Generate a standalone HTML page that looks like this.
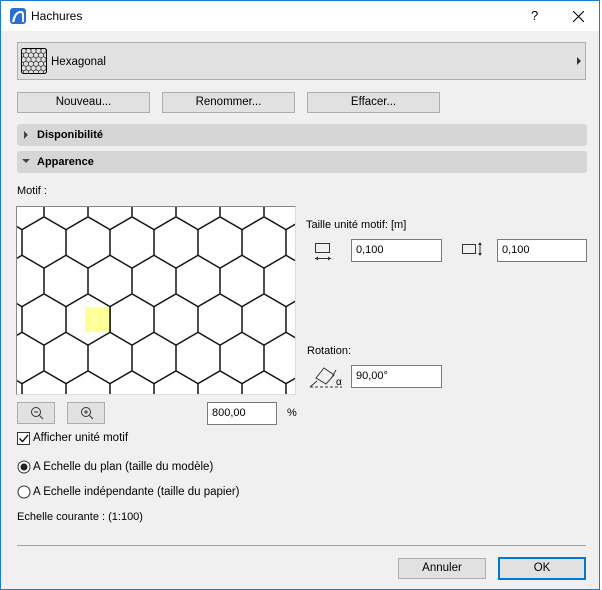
<!DOCTYPE html>
<html><head><meta charset="utf-8"><style>
*{box-sizing:border-box;margin:0;padding:0}
body{width:602px;height:590px;background:#fff;font-family:"Liberation Sans",sans-serif;font-size:11px;color:#000;position:relative;overflow:hidden}
.win{position:absolute;left:0;top:0;width:600px;height:590px;border:1px solid #1a7fd4;background:#f0f0f0}
.title{position:absolute;left:0;top:0;width:598px;height:30px;background:#fff}
.a{position:absolute}
.btn{position:absolute;background:#e1e1e1;border:1px solid #adadad;text-align:center;line-height:19px;font-size:11.5px}
.hdr{position:absolute;left:16px;width:570px;height:22px;background:#d6d6d6;border-radius:3px;font-weight:bold;font-size:11px;line-height:22px;padding-left:20px}
.inp{position:absolute;background:#fff;border:1px solid #7a7a7a;height:23px;line-height:21px;padding-left:4px;font-size:11px}
</style></head><body>
<div class="win">
<div class="title">
<svg class="a" style="left:9px;top:7px" width="16" height="16" viewBox="0 0 16 16"><rect x="0" y="0" width="16" height="16" rx="3" fill="#2a6fd0"/><path d="M2 14 Q4 3 11 3 Q14 3 14 7 L14 14 L12 14 L12 7 Q12 5 10.5 5 Q6 5 4.5 14 Z" fill="#fff"/></svg>
<div class="a" style="left:30px;top:8px;font-size:12px">Hachures</div>
<div class="a" style="left:530px;top:7px;font-size:13px">?</div>
<svg class="a" style="left:572px;top:10px" width="11" height="11"><path d="M0 0L11 11M11 0L0 11" stroke="#000" stroke-width="1.1"/></svg>
</div>
<div class="a" style="left:16px;top:41px;width:569px;height:38px;background:#e1e1e1;border:1px solid #adadad"></div>
<svg class="a" style="left:20px;top:47px" width="26" height="26"><defs><pattern id="sh" width="5" height="8.66" patternUnits="userSpaceOnUse"><path d="M2.5 0L5 1.44L5 4.33L2.5 5.77L0 4.33L0 1.44Z M2.5 5.77L2.5 8.66" fill="none" stroke="#000" stroke-width="0.6"/></pattern></defs><rect x="0.5" y="0.5" width="25" height="25" rx="2" fill="url(#sh)" stroke="#000"/></svg>
<div class="a" style="left:50px;top:55px;font-size:11.5px">Hexagonal</div>
<svg class="a" style="left:576px;top:56px" width="5" height="8"><path d="M0 0L4 4L0 8Z" fill="#333"/></svg>
<div class="btn" style="left:16px;top:91px;width:133px;height:21px">Nouveau...</div>
<div class="btn" style="left:161px;top:91px;width:133px;height:21px">Renommer...</div>
<div class="btn" style="left:306px;top:91px;width:133px;height:21px">Effacer...</div>
<div class="hdr" style="top:123px">Disponibilité</div>
<svg class="a" style="left:23px;top:130px" width="5" height="8"><path d="M0 0L4 4L0 8Z" fill="#444"/></svg>
<div class="hdr" style="top:150px">Apparence</div>
<svg class="a" style="left:21px;top:158px" width="8" height="5"><path d="M0 0L8 0L4 4Z" fill="#444"/></svg>
<div class="a" style="left:16px;top:184px">Motif :</div>
<div class="a" style="left:15px;top:205px;width:280px;height:189px;border-top:1px solid #888;border-left:1px solid #888;border-right:1px solid #ddd;border-bottom:1px solid #ddd;background:#fff;overflow:hidden">
<svg width="278" height="187" style="display:block"><defs><pattern id="hx" x="5" y="9.83" width="44" height="77" patternUnits="userSpaceOnUse"><path d="M22 0L44 12.83L44 38.5L22 51.33L0 38.5L0 12.83Z M22 51.33L22 77" fill="none" stroke="#000" stroke-width="1.4"/></pattern></defs><rect width="278" height="187" fill="url(#hx)"/><rect x="68" y="100" width="25" height="25" fill="#ffff99"/><path d="M93 100 L93 125" stroke="#000" stroke-width="1.4"/></svg>
</div>
<div class="a" style="left:305px;top:218px">Taille unité motif: [m]</div>
<svg class="a" style="left:313px;top:241px" width="18" height="20"><rect x="1.5" y="1.5" width="14" height="9" fill="none" stroke="#333"/><path d="M1 16.5H17" stroke="#333"/><path d="M1 16.5L4 14.5V18.5Z M17 16.5L14 14.5V18.5Z" fill="#333"/></svg>
<div class="inp" style="left:350px;top:238px;width:91px">0,100</div>
<svg class="a" style="left:460px;top:241px" width="22" height="14"><rect x="1.5" y="2.5" width="13" height="9" fill="none" stroke="#333"/><path d="M19 1V13" stroke="#333"/><path d="M19 0L17 3H21Z M19 14L17 11H21Z" fill="#333"/></svg>
<div class="inp" style="left:496px;top:238px;width:90px">0,100</div>
<div class="a" style="left:306px;top:344px">Rotation:</div>
<svg class="a" style="left:307px;top:364px" width="34" height="23"><path d="M8 13L16 3L26 10L18 19Z" fill="none" stroke="#333"/><path d="M28 5L24 12" stroke="#333"/><path d="M2 22H34" stroke="#333" stroke-dasharray="3 2"/><path d="M2 22L9 16" stroke="#333"/><text x="28" y="20" font-size="10" font-family="Liberation Sans,sans-serif">α</text></svg>
<div class="inp" style="left:350px;top:364px;width:91px">90,00°</div>
<div class="btn" style="left:16px;top:401px;width:38px;height:22px"></div>
<svg class="a" style="left:29px;top:405px" width="14" height="14"><circle cx="6" cy="6" r="4.5" fill="none" stroke="#333"/><path d="M4 6H8M9.5 9.5L13 13" stroke="#333"/></svg>
<div class="btn" style="left:66px;top:401px;width:38px;height:22px"></div>
<svg class="a" style="left:79px;top:405px" width="14" height="14"><circle cx="6" cy="6" r="4.5" fill="none" stroke="#333"/><path d="M4 6H8M6 4V8M9.5 9.5L13 13" stroke="#333"/></svg>
<div class="inp" style="left:206px;top:401px;width:70px">800,00</div>
<div class="a" style="left:286px;top:406px">%</div>
<div class="a" style="left:16px;top:431px;width:13px;height:13px;border:1px solid #333;background:#fff"></div>
<svg class="a" style="left:17px;top:432px" width="11" height="11"><path d="M1.5 5.5L4.5 8.5L10 2" fill="none" stroke="#000" stroke-width="1.3"/></svg>
<div class="a" style="left:32px;top:431px;font-size:11.5px">Afficher unité motif</div>
<svg class="a" style="left:16px;top:459px" width="14" height="14"><circle cx="7" cy="7" r="6" fill="#fff" stroke="#333"/><circle cx="7" cy="7" r="3.5" fill="#222"/></svg>
<div class="a" style="left:32px;top:460px;font-size:11.5px">A Echelle du plan (taille du modèle)</div>
<svg class="a" style="left:16px;top:484px" width="14" height="14"><circle cx="7" cy="7" r="6" fill="#fff" stroke="#333"/></svg>
<div class="a" style="left:32px;top:485px;font-size:11.5px">A Echelle indépendante (taille du papier)</div>
<div class="a" style="left:16px;top:510px">Echelle courante : (1:100)</div>
<div class="a" style="left:16px;top:544px;width:569px;height:1px;background:#a0a0a0"></div>
<div class="btn" style="left:397px;top:557px;width:88px;height:21px">Annuler</div>
<div class="btn" style="left:497px;top:556px;width:88px;height:23px;border:2px solid #0078d7;line-height:19px">OK</div>
</div>
</body></html>
